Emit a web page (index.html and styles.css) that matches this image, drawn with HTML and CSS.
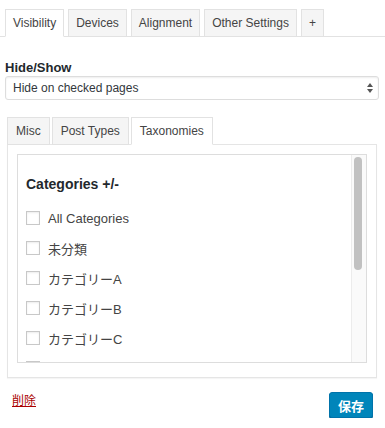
FILE: index.html
```html
<!DOCTYPE html>
<html lang="ja">
  <head>
    <meta charset="UTF-8" />
    <meta name="viewport" content="width=device-width, initial-scale=1.0" />
    <title>Widget Options</title>
    <link rel="stylesheet" href="styles.css">
  </head>
  <body>
    <div class="tabs">
      <span class="tab active">Visibility</span>
      <span class="tab">Devices</span>
      <span class="tab">Alignment</span>
      <span class="tab">Other Settings</span>
      <span class="tab">+</span>
    </div>

    <div class="field">
      <label class="field-label" for="hideshow">Hide/Show</label>
      <div class="select-wrap">
        <select id="hideshow" class="select">
          <option>Hide on checked pages</option>
          <option>Show on checked pages</option>
        </select>
      </div>
    </div>

    <div class="subtabs">
      <span class="subtab">Misc</span>
      <span class="subtab">Post Types</span>
      <span class="subtab active">Taxonomies</span>
    </div>
    <div class="panel">
      <div class="list-wrap">
        <div class="list">
          <h4 class="list-title">Categories +/-</h4>
          <label class="item"><input type="checkbox" class="check" /> All Categories</label>
          <label class="item"><input type="checkbox" class="check" /> 未分類</label>
          <label class="item"><input type="checkbox" class="check" /> カテゴリーA</label>
          <label class="item"><input type="checkbox" class="check" /> カテゴリーB</label>
          <label class="item"><input type="checkbox" class="check" /> カテゴリーC</label>
          <label class="item"><input type="checkbox" class="check" /> カテゴリーD</label>
        </div>
        <div class="scrollbar"><div class="thumb"></div></div>
      </div>
    </div>

    <div class="actions">
      <a href="#" class="delete">削除</a>
      <button class="btn">保存</button>
    </div>
  </body>
</html>
```

FILE: styles.css
```css
* {
  margin: 0;
  padding: 0;
  box-sizing: border-box;
}
body {
  font-family: "Liberation Sans", "Noto Sans CJK JP", sans-serif;
  font-size: 13px;
  color: #32373c;
  background: #fff;
}

/* top tabs */
.tabs {
  display: flex;
  gap: 4px;
  padding: 9px 0 0 5px;
  border-bottom: 1px solid #e2e2e2;
}
.tab {
  font-size: 12px;
  line-height: 26px;
  padding: 0 7px;
  border: 1px solid #e2e2e2;
  margin-bottom: -1px;
  background: #f5f5f5;
  color: #444;
}
.tab.active {
  background: #fff;
  border-bottom-color: #fff;
}

/* hide/show select */
.field {
  margin-top: 23px;
  padding: 0 6px 0 5px;
}
.field-label {
  display: block;
  font-weight: bold;
  font-size: 13px;
  line-height: 16px;
  color: #23282d;
}
.select-wrap {
  position: relative;
}
.select {
  -webkit-appearance: none;
  appearance: none;
  width: 100%;
  height: 24px;
  padding: 0 20px 0 7px;
  font-family: inherit;
  font-size: 12px;
  color: #32373c;
  background: #fff;
  border: 1px solid #ddd;
  border-radius: 3px;
  box-shadow: inset 0 1px 2px rgba(0, 0, 0, 0.07);
}
.select-wrap::before,
.select-wrap::after {
  content: "";
  position: absolute;
  right: 6px;
  border-left: 3px solid transparent;
  border-right: 3px solid transparent;
}
.select-wrap::before {
  top: 7px;
  border-bottom: 4px solid #555;
}
.select-wrap::after {
  top: 13px;
  border-top: 4px solid #555;
}

/* sub tabs */
.subtabs {
  display: flex;
  gap: 2px;
  margin-top: 17px;
  padding-left: 7px;
}
.subtab {
  font-size: 12px;
  line-height: 26px;
  padding: 0 8px;
  border: 1px solid #e2e2e2;
  margin-bottom: -1px;
  background: #f5f5f5;
  color: #444;
  position: relative;
}
.subtab.active {
  background: #fff;
  border-bottom-color: #fff;
}
.panel {
  margin: 0 8px 0 7px;
  padding: 9px 9px 14px;
  border: 1px solid #e5e5e5;
  box-shadow: 0 1px 1px rgba(0, 0, 0, 0.04);
}
.list-wrap {
  position: relative;
  height: 209px;
  border: 1px solid #ddd;
  overflow: hidden;
}
.list {
  height: 100%;
  overflow: hidden;
  padding: 20px 23px 0 8px;
}
.scrollbar {
  position: absolute;
  top: 0;
  right: 0;
  bottom: 0;
  width: 15px;
  background: #fafafa;
  border-left: 1px solid #ececec;
  padding: 2px 3px 0 2px;
}
.thumb {
  width: 8px;
  height: 113px;
  border-radius: 4px;
  background: #c1c1c1;
}
.list-title {
  font-size: 14px;
  line-height: 18px;
  font-weight: bold;
  color: #23282d;
  margin-bottom: 10px;
}
.item {
  display: flex;
  align-items: center;
  height: 30px;
  font-size: 13px;
  color: #444;
}
.check {
  -webkit-appearance: none;
  appearance: none;
  flex: none;
  width: 14px;
  height: 14px;
  margin-right: 8px;
  border: 1px solid #c8c8c8;
  background: #fff;
  box-shadow: inset 0 1px 2px rgba(0, 0, 0, 0.08);
}

/* footer */
.actions {
  display: flex;
  justify-content: space-between;
  align-items: flex-start;
  margin-top: 14px;
  padding: 0 12px;
}
.delete {
  margin-top: 1px;
  font-size: 12px;
  line-height: 16px;
  color: #a00;
  text-decoration: underline;
}
.btn {
  height: 26px;
  padding: 0 8px;
  font-family: inherit;
  font-size: 13px;
  font-weight: bold;
  color: #fff;
  background: #0085ba;
  border: 1px solid #0073aa;
  border-radius: 3px;
  box-shadow: 0 1px 0 #006799;
  cursor: pointer;
}
```
